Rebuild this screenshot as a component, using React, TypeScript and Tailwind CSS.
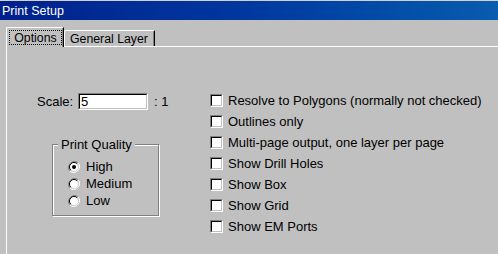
const FONT = "font-['Liberation_Sans',Arial,sans-serif]"

const OPTIONS = [
  'Resolve to Polygons (normally not checked)',
  'Outlines only',
  'Multi-page output, one layer per page',
  'Show Drill Holes',
  'Show Box',
  'Show Grid',
  'Show EM Ports',
]

function Sunken({ className, children }: { className: string; children?: React.ReactNode }) {
  // classic win32 two-tone sunken edge
  return (
    <div className={`border border-t-[#808080] border-l-[#808080] border-b-white border-r-white ${className}`}>
      <div className="h-full w-full border border-t-black border-l-black border-b-[#c0c0c0] border-r-[#c0c0c0] bg-white">
        {children}
      </div>
    </div>
  )
}

function Radio({ checked }: { checked?: boolean }) {
  return (
    <svg width="12" height="12" viewBox="0 0 12 12" className="shrink-0">
      <path d="M10.2 1.8 A6 6 0 0 0 1.8 10.2" fill="none" stroke="#808080" strokeWidth="1" />
      <path d="M1.8 10.2 A6 6 0 0 0 10.2 1.8" fill="none" stroke="#ffffff" strokeWidth="1" />
      <circle cx="6" cy="6" r="4.5" fill="#ffffff" />
      <path d="M9.2 2.8 A4.5 4.5 0 0 0 2.8 9.2" fill="none" stroke="#000000" strokeWidth="1" />
      <path d="M2.8 9.2 A4.5 4.5 0 0 0 9.2 2.8" fill="none" stroke="#d4d0c8" strokeWidth="1" />
      {checked && <circle cx="6" cy="6" r="2" fill="#000000" />}
    </svg>
  )
}

export default function App() {
  return (
    <div className={`w-[498px] h-[254px] overflow-hidden bg-[#c0c0c0] text-[12px] leading-[14px] text-black ${FONT}`}>
      <div className="h-px bg-[#d4d0c8]" />
      <div className="h-[19px] flex items-center pl-[2px] text-white text-[12.5px] bg-gradient-to-r from-[#00208c] via-[#0038a0] to-[#0a5cae]">
        Print Setup
      </div>

      <div className="flex items-end ml-[6px] mt-[7px] text-[12.3px]">
        <div className="relative z-10 -mb-px h-[20px] w-[58px] bg-[#c0c0c0] border-t border-l border-white border-r border-r-black rounded-tl-[2px] shadow-[inset_-1px_0_0_#808080] px-[2px] pt-[2px]">
          <div className="h-[15px] w-[53px] flex items-center justify-center outline outline-1 outline-dotted outline-black -outline-offset-1">
            Options
          </div>
        </div>
        <div className="h-[16px] w-[91px] border-t border-l border-white border-r border-r-black rounded-tl-[2px] shadow-[inset_-1px_0_0_#808080] flex items-center pl-[5px]">
          General Layer
        </div>
      </div>

      <div className="ml-[6px] w-[600px] h-[300px] border-t border-l border-white flex items-start text-[13px] leading-[15px]">
        <div className="w-[203px] shrink-0 pt-[46px]">
          <div className="flex items-center h-[17px] ml-[30px]">
            <span className="w-[41px]">Scale:</span>
            <Sunken className="w-[70px] h-[17px]">
              <div className="pl-[1px] leading-[13px]">5</div>
            </Sunken>
            <span className="ml-[6px]">: 1</span>
          </div>

          <div className="relative ml-[45px] mt-[34px] w-[107px] h-[72px] border border-[#808080] shadow-[inset_1px_1px_0_#fff,1px_1px_0_#fff]">
            <span className="absolute -top-[8px] left-[5px] bg-[#c0c0c0] px-[3px]">Print Quality</span>
            <div className="pt-[13px] pl-[15px]">
              {['High', 'Medium', 'Low'].map((label, i) => (
                <div key={label} className="flex items-center h-[17px] gap-[6px]">
                  <Radio checked={i === 0} />
                  <span>{label}</span>
                </div>
              ))}
            </div>
          </div>
        </div>

        <div className="pt-[43px]">
          {OPTIONS.map((label) => (
            <div key={label} className="flex items-center h-[21px] gap-[5px]">
              <Sunken className="w-[13px] h-[13px] shrink-0" />
              <span>{label}</span>
            </div>
          ))}
        </div>
      </div>
    </div>
  )
}
